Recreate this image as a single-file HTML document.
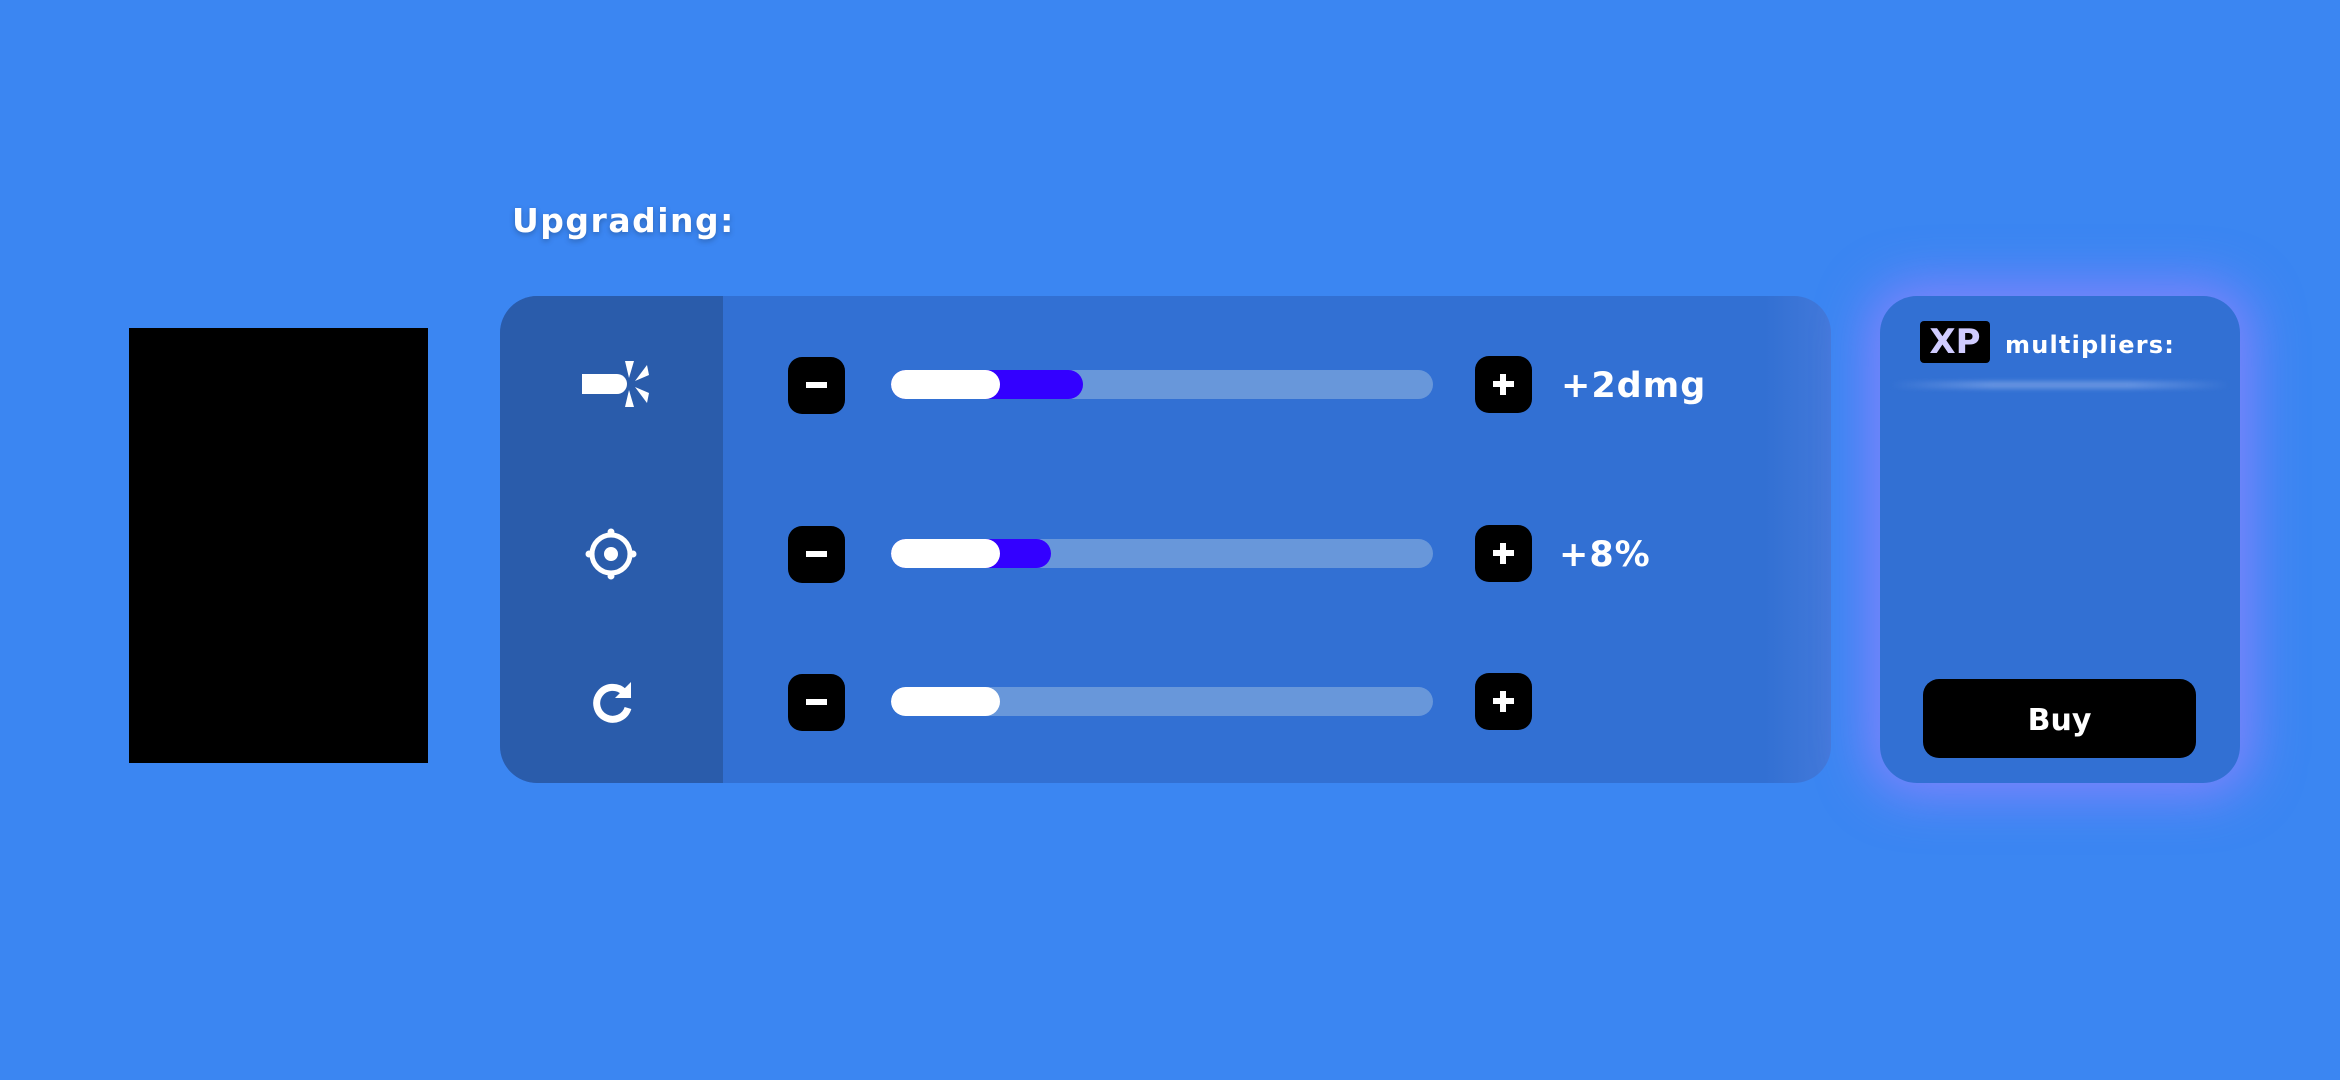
<!DOCTYPE html>
<html><head><meta charset="utf-8"><style>
*{margin:0;padding:0;box-sizing:border-box}
body{width:2340px;height:1080px;background:#3b86f2;position:relative;overflow:hidden;font-family:"DejaVu Sans","Liberation Sans",sans-serif;font-weight:bold;color:#fff}
.abs{position:absolute}
.black{left:129px;top:328px;width:299px;height:435px;background:#000}
.title{left:512px;top:201px;font-size:33px;letter-spacing:1.5px;text-shadow:0 2px 6px rgba(0,0,0,.25)}
.panel{left:500px;top:296px;width:1331px;height:487px;border-radius:37px;background:linear-gradient(90deg,#3270d3 0,#3270d3 95%,#4379da 100%);overflow:hidden}
.col{left:0;top:0;width:223px;height:487px;background:#2a5cab}
.btn{width:57px;height:57px;background:#000;border-radius:14px}
.btn:before{content:"";position:absolute;left:18px;top:25px;width:21px;height:6px;background:#fff}
.plus:after{content:"";position:absolute;left:25px;top:18px;width:6px;height:21px;background:#fff}
.bar{width:542px;height:29px;border-radius:15px;background:#6897da;overflow:hidden}
.fill{position:absolute;left:0;top:0;height:29px;border-radius:15px;background:#3300ff}
.wh{position:absolute;left:0;top:0;width:109px;height:29px;border-radius:15px;background:#fff}
.val{font-size:35px;letter-spacing:1px}
.xp{left:1880px;top:296px;width:360px;height:487px;border-radius:37px;background:#3270d3;box-shadow:0 0 50px 12px rgba(140,130,255,.85)}
.badge{left:40px;top:25px;width:70px;height:42px;background:#000;border-radius:4px;color:#d0ccff;font-size:34px;text-align:center;line-height:43px}
.mult{left:125px;top:35px;font-size:24px;letter-spacing:1.2px}
.line{left:10px;top:85px;width:340px;height:8px;background:linear-gradient(90deg,rgba(255,255,255,0),rgba(120,160,230,.7) 30%,rgba(120,160,230,.7) 70%,rgba(255,255,255,0));filter:blur(2px)}
.buy{left:43px;top:383px;width:273px;height:79px;background:#000;border-radius:16px;font-size:30px;text-align:center;line-height:84px}
</style></head><body>
<div class="abs black"></div>
<div class="abs title">Upgrading:</div>
<div class="abs panel">
 <div class="abs col"></div>
 <svg class="abs" style="left:82px;top:65px" width="70" height="50" viewBox="0 0 70 50">
  <path d="M0 13h35a10 10 0 0 1 0 20H0z" fill="#fff"/>
  <path d="M43 0L52 0 47 17z M65 4L67 14 53 20z M43 46L52 46 47 29z M65 42L67 32 53 26z" fill="#fff"/>
 </svg>
 <svg class="abs" style="left:85px;top:232px" width="52" height="52" viewBox="0 0 52 52">
  <circle cx="26" cy="26" r="19" fill="none" stroke="#fff" stroke-width="5"/>
  <circle cx="26" cy="26" r="7" fill="#fff"/>
  <circle cx="26" cy="4" r="3.5" fill="#fff"/><circle cx="26" cy="48" r="3.5" fill="#fff"/>
  <circle cx="4" cy="26" r="3.5" fill="#fff"/><circle cx="48" cy="26" r="3.5" fill="#fff"/>
 </svg>
 <svg class="abs" style="left:91px;top:384px" width="44" height="44" viewBox="0 0 44 44">
  <path d="M33 12A16 16 0 1 0 37 28" fill="none" stroke="#fff" stroke-width="7"/>
  <path d="M24 18L40 18 40 2z" fill="#fff"/>
 </svg>
 <div class="abs btn" style="left:288px;top:61px"></div>
 <div class="abs bar" style="left:391px;top:74px"><div class="fill" style="width:192px"></div><div class="wh"></div></div>
 <div class="abs btn plus" style="left:975px;top:60px"></div>
 <div class="abs val" style="left:1061px;top:70px">+2dmg</div>
 <div class="abs btn" style="left:288px;top:230px"></div>
 <div class="abs bar" style="left:391px;top:243px"><div class="fill" style="width:160px"></div><div class="wh"></div></div>
 <div class="abs btn plus" style="left:975px;top:229px"></div>
 <div class="abs val" style="left:1059px;top:239px">+8%</div>
 <div class="abs btn" style="left:288px;top:378px"></div>
 <div class="abs bar" style="left:391px;top:391px"><div class="wh"></div></div>
 <div class="abs btn plus" style="left:975px;top:377px"></div>
</div>
<div class="abs xp">
 <div class="abs badge">XP</div>
 <div class="abs mult">multipliers:</div>
 <div class="abs line"></div>
 <div class="abs buy">Buy</div>
</div>
</body></html>
